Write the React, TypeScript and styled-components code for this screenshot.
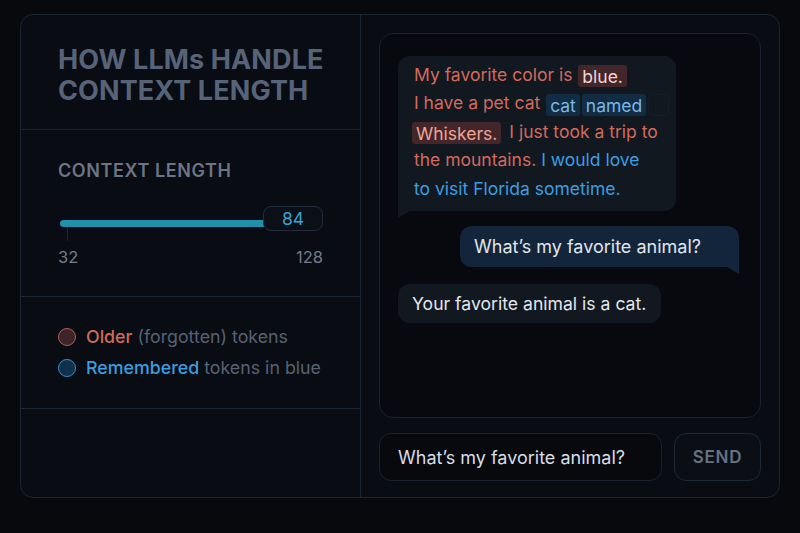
import React from "react";
import styled, { createGlobalStyle } from "styled-components";

const Global = createGlobalStyle`
  html, body { margin: 0; padding: 0; background: #07090d; }
  body { font-family: Inter, "Noto Sans", sans-serif; -webkit-font-smoothing: antialiased; }
  * { box-sizing: border-box; }
`;

const Page = styled.div`
  width: 800px;
  height: 533px;
  padding: 14px 20px 35px 20px;
  background: #07090d;
`;

const Card = styled.div`
  height: 484px;
  display: grid;
  grid-template-columns: 340px 1fr;
  border: 1px solid #1c2533;
  border-radius: 13px;
  background: #090c12;
  overflow: hidden;
`;

const Left = styled.div`
  display: flex;
  flex-direction: column;
  border-right: 1px solid #1c2533;
`;

const Section = styled.div<{ $h: number; $pt: number; $last?: boolean }>`
  height: ${(p) => p.$h}px;
  padding: ${(p) => p.$pt}px 37px 0 37px;
  border-bottom: ${(p) => (p.$last ? "none" : "1px solid #1c2533")};
`;

const Title = styled.h1`
  margin: 0;
  font-size: 27px;
  line-height: 31px;
  font-weight: 700;
  color: #566379;
  letter-spacing: 0.1px;
  white-space: nowrap;
`;

const Label = styled.div`
  font-size: 18px;
  line-height: 22px;
  font-weight: 600;
  color: #6c7586;
  letter-spacing: 0.6px;
`;

const SliderRow = styled.div`
  position: relative;
  margin-top: 24px;
  height: 26px;
  display: flex;
  align-items: center;
`;

const Track = styled.div`
  position: relative;
  height: 7px;
  margin-top: 8px;
  border-radius: 4px 0 0 4px;
  background: #2090ab;
`;

const Tick = styled.div`
  position: absolute;
  left: 7px;
  top: 7px;
  width: 1px;
  height: 14px;
  background: #1c2330;
`;

const ValueBox = styled.div`
  position: absolute;
  right: 0;
  top: 0;
  width: 60px;
  height: 25px;
  border: 1px solid #222c3a;
  border-radius: 8px;
  background: #0b0f16;
  color: #36a6d6;
  font-size: 17.5px;
  display: flex;
  align-items: center;
  justify-content: center;
`;

const Range = styled.div`
  margin-top: 15px;
  display: flex;
  justify-content: space-between;
  font-size: 16.5px;
  color: #747d8c;
`;

const LegendRow = styled.div`
  display: flex;
  align-items: center;
  gap: 10px;
  height: 31px;
  font-size: 17.8px;
  color: #576274;
`;

const Dot = styled.span<{ $kind: "old" | "kept" }>`
  width: 18px;
  height: 18px;
  border-radius: 50%;
  flex: none;
  background: ${(p) => (p.$kind === "old" ? "#3d2428" : "#12304a")};
  border: 1.5px solid ${(p) => (p.$kind === "old" ? "#b65a52" : "#3490d0")};
`;

const Strong = styled.span<{ $kind: "old" | "kept" }>`
  color: ${(p) => (p.$kind === "old" ? "#d36a5c" : "#3a9ee0")};
  font-weight: 500;
  margin-right: 5px;
`;

const Right = styled.div`
  display: flex;
  flex-direction: column;
  gap: 15px;
  padding: 18px 18px 16px 18px;
`;

const Chat = styled.div`
  flex: 1;
  border: 1px solid #1a2230;
  border-radius: 14px;
  background: #07090e;
  padding: 22px 18px 0 18px;
  display: flex;
  flex-direction: column;
  align-items: flex-start;
`;

const Bubble = styled.div<{ $me?: boolean }>`
  position: relative;
  align-self: ${(p) => (p.$me ? "flex-end" : "flex-start")};
  background: ${(p) => (p.$me ? "#13253a" : "#121820")};
  color: #e2e6ec;
  font-size: 18px;
  border-radius: 12px;
  border-${(p) => (p.$me ? "bottom-right" : "bottom-left")}-radius: 0;
  &::after {
    content: "";
    position: absolute;
    top: 100%;
    ${(p) => (p.$me ? "right: 0;" : "left: 0;")}
    width: 12px;
    height: 7px;
    background: ${(p) => (p.$me ? "#13253a" : "#121820")};
    clip-path: ${(p) =>
      p.$me ? "polygon(0 0, 100% 0, 100% 100%)" : "polygon(0 0, 100% 0, 0 100%)"};
  }
`;

const Story = styled(Bubble)`
  width: 278px;
  padding: 5px 0 8px 16px;
  font-size: 17.5px;
  line-height: 28.4px;
  color: #d36a5c;
  white-space: nowrap;
`;

const Blue = styled.span`
  color: #3a9ee0;
`;

const Token = styled.span<{ $kind: "old" | "kept" | "empty" }>`
  display: inline-block;
  line-height: 21px;
  padding: 0 3px;
  margin: 0 1px;
  border-radius: 3px;
  background: ${(p) =>
    p.$kind === "old" ? "#43262a" : p.$kind === "kept" ? "#122c44" : "transparent"};
  color: ${(p) =>
    p.$kind === "old" ? "#f1d7d3" : p.$kind === "kept" ? "#7ab8e6" : "inherit"};
  border: 1px solid ${(p) => (p.$kind === "empty" ? "#151d29" : "transparent")};
  width: ${(p) => (p.$kind === "empty" ? "21px" : "auto")};
  height: 22px;
  vertical-align: middle;
`;

const OldWord = styled(Token)`
  color: #f0a596;
  margin-left: -2px;
  margin-right: 3px;
`;

const Question = styled(Bubble)`
  margin-top: 15px;
  margin-right: 3px;
  width: 279px;
  height: 41px;
  padding: 0 14px;
  display: flex;
  align-items: center;
`;

const Answer = styled(Bubble)`
  margin-top: 17px;
  width: 263px;
  height: 39px;
  padding: 0 14px;
  font-size: 17.6px;
  display: flex;
  align-items: center;
  border-bottom-left-radius: 12px;
  &::after { display: none; }
`;

const InputRow = styled.div`
  display: flex;
  gap: 12px;
  height: 48px;
`;

const Input = styled.div`
  flex: 0 0 283px;
  border: 1px solid #1a2230;
  border-radius: 12px;
  background: #07090d;
  color: #d9dee6;
  font-size: 18px;
  padding: 0 18px;
  display: flex;
  align-items: center;
`;

const Send = styled.button`
  flex: 1;
  border: 1px solid #1f2836;
  border-radius: 12px;
  background: #0b0f15;
  color: #667184;
  font-family: inherit;
  font-size: 17px;
  font-weight: 600;
  letter-spacing: 0.8px;
`;

export default function App() {
  return (
    <Page>
      <Global />
      <Card>
        <Left>
          <Section $h={115} $pt={29}>
            <Title>
              HOW LLMs HANDLE
              <br />
              CONTEXT LENGTH
            </Title>
          </Section>
          <Section $h={167} $pt={30}>
            <Label>CONTEXT LENGTH</Label>
            <SliderRow>
              <Track style={{ width: "205px", marginLeft: "2px" }}>
                <Tick />
              </Track>
              <ValueBox>84</ValueBox>
            </SliderRow>
            <Range>
              <span>32</span>
              <span>128</span>
            </Range>
          </Section>
          <Section $h={112} $pt={24}>
            <LegendRow>
              <Dot $kind="old" />
              <span>
                <Strong $kind="old">Older</Strong>(forgotten) tokens
              </span>
            </LegendRow>
            <LegendRow>
              <Dot $kind="kept" />
              <span>
                <Strong $kind="kept">Remembered</Strong>tokens in blue
              </span>
            </LegendRow>
          </Section>
          <Section $h={88} $pt={0} $last />
        </Left>
        <Right>
          <Chat>
            <Story>
              My favorite color is <Token $kind="old">blue.</Token>
              <br />
              I have a pet cat <Token $kind="kept">cat</Token>
              <Token $kind="kept">named</Token>
              <Token $kind="empty" />
              <br />
              <OldWord $kind="old">Whiskers.</OldWord> I just took a trip to
              <br />
              the mountains. <Blue>I would love</Blue>
              <br />
              <Blue>to visit Florida sometime.</Blue>
            </Story>
            <Question $me>What’s my favorite animal?</Question>
            <Answer>Your favorite animal is a cat.</Answer>
          </Chat>
          <InputRow>
            <Input>What’s my favorite animal?</Input>
            <Send>SEND</Send>
          </InputRow>
        </Right>
      </Card>
    </Page>
  );
}
